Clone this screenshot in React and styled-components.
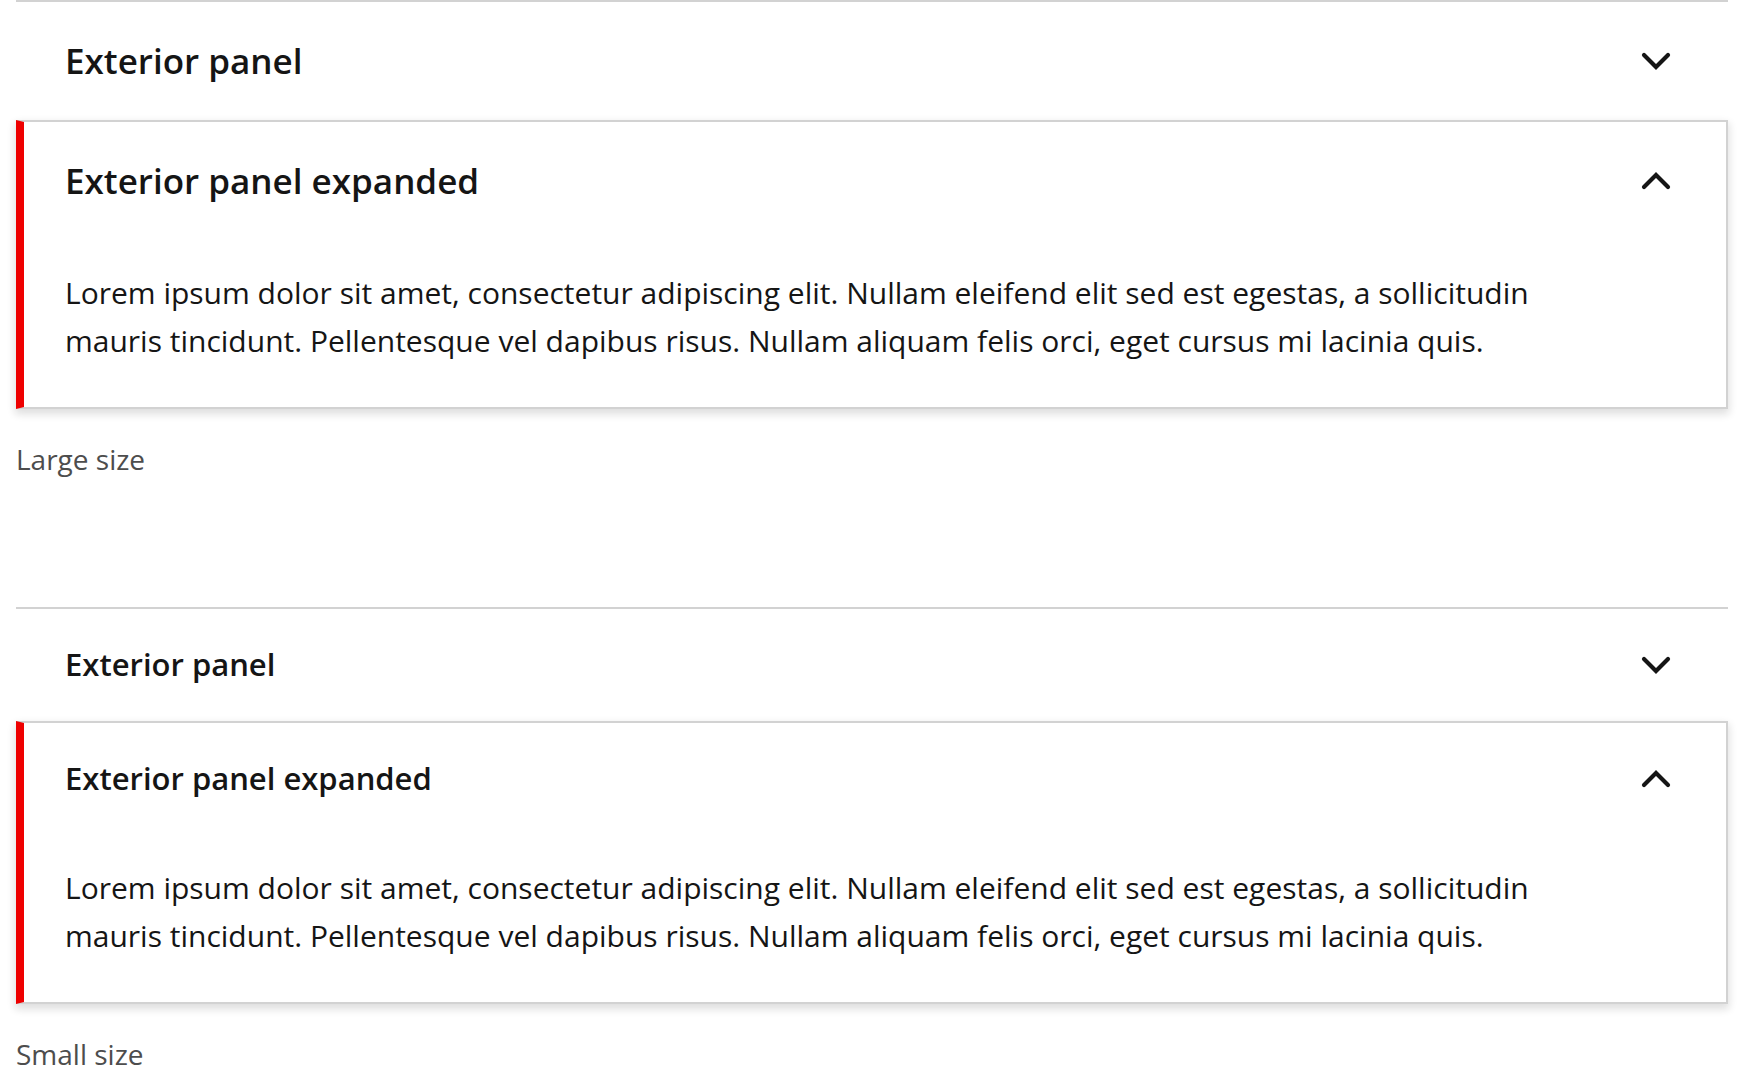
import React from 'react'
import styled, { createGlobalStyle, css } from 'styled-components'

const GlobalStyle = createGlobalStyle`
  html, body {
    margin: 0;
    padding: 0;
    background: #ffffff;
  }
  body {
    font-family: "Open Sans", "Liberation Sans", sans-serif;
    color: #151515;
  }
`

const LOREM =
  'Lorem ipsum dolor sit amet, consectetur adipiscing elit. Nullam eleifend elit sed est egestas, a sollicitudin mauris tincidunt. Pellentesque vel dapibus risus. Nullam aliquam felis orci, eget cursus mi lacinia quis.'

const Page = styled.main`
  padding: 0 16px;
`

const Section = styled.section`
  margin-bottom: ${p => (p.$last ? '0' : '128px')};
`

const Accordion = styled.div`
  display: flex;
  flex-direction: column;
`

const Item = styled.div`
  border-top: 2px solid #d2d2d2;
  background: #ffffff;
  ${p =>
    p.$expanded &&
    css`
      border-left: 8px solid #ee0000;
      border-right: 2px solid #d2d2d2;
      border-bottom: 2px solid #d2d2d2;
      box-shadow: 0 4px 8px 1px rgba(21, 21, 21, 0.14);
    `}
`

const Header = styled.div`
  display: flex;
  align-items: center;
  justify-content: space-between;
  box-sizing: border-box;
  min-height: ${p => (p.$size === 'small' ? '112px' : '118px')};
  padding: ${p => (p.$expanded ? '0 55px 0 41px' : '0 57px 0 49px')};
  cursor: pointer;
`

const Title = styled.h3`
  margin: 0;
  font-family: "Open Sans", "Liberation Sans", sans-serif;
  font-weight: 600;
  font-size: ${p => (p.$size === 'small' ? '31px' : '35px')};
  line-height: 1.2;
  color: #151515;
`

const Body = styled.div`
  padding: 29px 55px 42px 41px;
`

const Text = styled.p`
  margin: 0;
  max-width: 1530px;
  font-size: 30px;
  line-height: 48px;
  color: #151515;
`

const Caption = styled.p`
  margin: 30px 0 0;
  font-size: 28px;
  line-height: 40px;
  color: #4d4d4d;
`

const Chevron = ({ up }) => (
  <svg
    width="30"
    height="18"
    viewBox="0 0 30 18"
    style={up ? { transform: 'rotate(180deg)' } : undefined}
    aria-hidden="true"
  >
    <path
      d="M3 3 L15 15 L27 3"
      fill="none"
      stroke="#151515"
      strokeWidth="4.2"
      strokeLinecap="round"
    />
  </svg>
)

const AccordionItem = ({ title, expanded, size, children }) => (
  <Item $expanded={expanded}>
    <Header $expanded={expanded} $size={size}>
      <Title $size={size}>{title}</Title>
      <Chevron up={expanded} />
    </Header>
    {expanded && <Body>{children}</Body>}
  </Item>
)

const Demo = ({ size, label, last }) => (
  <Section $last={last}>
    <Accordion>
      <AccordionItem title="Exterior panel" size={size} />
      <AccordionItem title="Exterior panel expanded" size={size} expanded>
        <Text>{LOREM}</Text>
      </AccordionItem>
    </Accordion>
    <Caption>{label}</Caption>
  </Section>
)

export default function App() {
  return (
    <>
      <GlobalStyle />
      <Page>
        <Demo size="large" label="Large size" />
        <Demo size="small" label="Small size" last />
      </Page>
    </>
  )
}
